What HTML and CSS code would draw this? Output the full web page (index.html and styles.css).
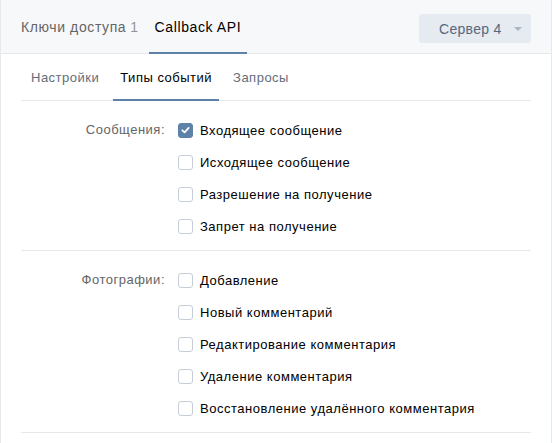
FILE: index.html
```html
<!DOCTYPE html>
<html lang="ru">
<head>
<meta charset="utf-8">
<title>Callback API</title>
<link rel="stylesheet" href="styles.css">
</head>
<body>
<div class="panel">
  <div class="header">
    <div class="tabs">
      <a class="tab">Ключи доступа <span class="count">1</span></a>
      <a class="tab active">Callback API</a>
    </div>
    <button class="select">
      <span>Сервер 4</span>
      <span class="arrow"></span>
    </button>
  </div>
  <div class="body">
    <div class="subtabs">
      <a class="subtab">Настройки</a>
      <a class="subtab active">Типы событий</a>
      <a class="subtab">Запросы</a>
    </div>
    <div class="section">
      <div class="label">Сообщения:</div>
      <div class="options">
        <label class="row"><span class="box checked"><svg viewBox="0 0 14 14" width="14" height="14"><path d="M3.6 7.3 L6 9.5 L10.4 4.7" fill="none" stroke="#fff" stroke-width="1.9" stroke-linecap="round" stroke-linejoin="round"/></svg></span>Входящее сообщение</label>
        <label class="row"><span class="box"></span>Исходящее сообщение</label>
        <label class="row"><span class="box"></span>Разрешение на получение</label>
        <label class="row"><span class="box"></span>Запрет на получение</label>
      </div>
    </div>
    <div class="section">
      <div class="label">Фотографии:</div>
      <div class="options">
        <label class="row"><span class="box"></span>Добавление</label>
        <label class="row"><span class="box"></span>Новый комментарий</label>
        <label class="row"><span class="box"></span>Редактирование комментария</label>
        <label class="row"><span class="box"></span>Удаление комментария</label>
        <label class="row"><span class="box"></span>Восстановление удалённого комментария</label>
      </div>
    </div>
  </div>
</div>
</body>
</html>
```

FILE: styles.css
```css
* { box-sizing: border-box; }
html, body { margin: 0; padding: 0; background: #fff; }
body {
  font-family: "Liberation Sans", Arial, sans-serif;
  font-size: 13px;
  color: #000;
}
.panel {
  width: 552px;
  min-height: 443px;
  border-left: 1px solid #e7e8ec;
  border-right: 1px solid #e7e8ec;
  background: #fff;
}
.header {
  height: 54px;
  background: #f7f8fa;
  border-bottom: 1px solid #e7e8ec;
  display: flex;
  justify-content: space-between;
  align-items: flex-start;
  padding: 0 20px 0 14px;
}
.tabs { display: flex; height: 54px; }
.tab {
  display: flex;
  align-items: center;
  height: 54px;
  padding: 1px 6px 0;
  margin-right: 4px;
  font-size: 14px;
  letter-spacing: 0.6px;
  color: #656565;
  border-bottom: 2px solid transparent;
}
.tab .count { color: #939393; margin-left: 4px; }
.tab.active { color: #000; border-bottom-color: #5e81a8; }
.select {
  margin-top: 14px;
  width: 112px;
  height: 29px;
  border: 0;
  border-radius: 3px;
  background: #e5ebf1;
  color: #55677d;
  font-family: inherit;
  font-size: 14px;
  letter-spacing: 0.3px;
  display: flex;
  align-items: center;
  justify-content: space-between;
  padding: 0 9px 0 20px;
}
.arrow {
  width: 0;
  height: 0;
  border-left: 4px solid transparent;
  border-right: 4px solid transparent;
  border-top: 4px solid #aab8c6;
  margin-top: 1px;
}
.body { padding: 0 20px; }
.subtabs {
  display: flex;
  height: 47px;
  border-bottom: 1px solid #e7e8ec;
  padding-left: 3px;
}
.subtab {
  display: flex;
  align-items: center;
  height: 47px;
  padding: 2px 7px 0;
  margin-right: 7px;
  color: #626d7a;
  letter-spacing: 0.5px;
  border-bottom: 2px solid transparent;
  margin-bottom: -1px;
}
.subtab.active { color: #000; border-bottom-color: #5e81a8; }
.section {
  display: grid;
  grid-template-columns: 144px 1fr;
  column-gap: 13px;
  padding: 13px 0 8px;
  border-bottom: 1px solid #e7e8ec;
}
.label {
  text-align: right;
  line-height: 32px;
  height: 32px;
  color: #656565;
  letter-spacing: 0.5px;
}
.options { display: flex; flex-direction: column; }
.row {
  display: flex;
  align-items: center;
  height: 32px;
  letter-spacing: 0.52px;
}
.box {
  width: 15px;
  height: 15px;
  border: 1px solid #c5ced8;
  border-radius: 3px;
  background: #fff;
  margin-right: 7px;
  flex: none;
  display: flex;
  align-items: center;
  justify-content: center;
}
.box.checked {
  background: #5e81a8;
  border-color: #5e81a8;
}
.box svg { display: block; }
```
